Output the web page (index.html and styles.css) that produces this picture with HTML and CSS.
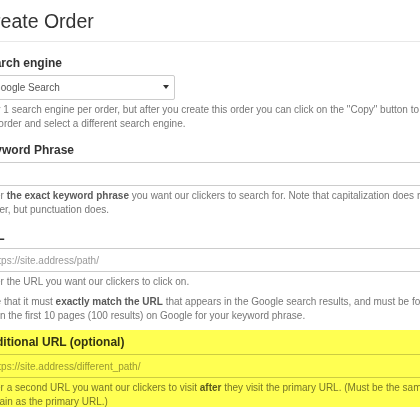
FILE: index.html
```html
<!DOCTYPE html>
<html lang="en">
<head>
<meta charset="utf-8">
<title>Create Order</title>
<link rel="stylesheet" href="styles.css">
</head>
<body>
<div class="page">
  <div class="header">
    <h2 class="title">Create Order</h2>
  </div>

  <div class="group">
    <label class="label">Search engine</label>
    <div class="select">
      <span class="select-text">Google Search</span>
      <svg class="caret" width="6" height="4" viewBox="0 0 6 4"><polygon points="0,0 6,0 3,4" fill="#333"/></svg>
    </div>
    <p class="help">Only 1 search engine per order, but after you create this order you can click on the "Copy" button to copy this order and select a different search engine.</p>
  </div>

  <div class="group">
    <label class="label">Keyword Phrase</label>
    <input class="input" type="text">
    <p class="help">Enter <b class="strong">the exact keyword phrase</b> you want our clickers to search for. Note that capitalization does not matter, but punctuation does.</p>
  </div>

  <div class="group">
    <label class="label">URL</label>
    <input class="input" type="text" placeholder="https://site.address/path/">
    <p class="help">Enter the URL you want our clickers to click on.</p>
    <p class="help help-next">Note that it must <b class="strong">exactly match the URL</b> that appears in the Google search results, and must be found within the first 10 pages (100 results) on Google for your keyword phrase.</p>
  </div>

  <div class="group highlighted">
    <label class="label">Additional URL (optional)</label>
    <input class="input" type="text" placeholder="https://site.address/different_path/">
    <p class="help">Enter a second URL you want our clickers to visit <b class="strong">after</b> they visit the primary URL. (Must be the same domain as the primary URL.)</p>
  </div>
</div>
</body>
</html>
```

FILE: styles.css
```css
html {
  background: #ffffff;
}

body {
  margin: 0;
  width: 420px;
  height: 420px;
  overflow: hidden;
  font-family: "Liberation Sans", Arial, sans-serif;
  color: #333333;
}

.page {
  margin-left: -20px;
  width: 470px;
}

.header {
  padding-top: 10px;
  padding-bottom: 9px;
  border-bottom: 1px solid #e8e8e8;
  margin-bottom: 13px;
}

.title {
  margin: 0;
  font-size: 19.5px;
  line-height: 22px;
  font-weight: normal;
  color: #333333;
}

.group {
  margin-bottom: 11px;
}

.label {
  display: block;
  font-size: 12px;
  line-height: 16px;
  font-weight: bold;
  color: #333333;
  margin-bottom: 4px;
}

.select {
  box-sizing: border-box;
  width: 195px;
  height: 25px;
  border: 1px solid #cccccc;
  border-radius: 2px;
  background: #ffffff;
  display: flex;
  align-items: center;
  justify-content: space-between;
  padding: 0 5px 0 12px;
}

.select-text {
  font-size: 10px;
  color: #555555;
}

.caret {
  display: block;
  margin-top: -2px;
}

.input {
  display: block;
  box-sizing: border-box;
  width: 100%;
  height: 24px;
  margin: 0;
  padding: 0 9px;
  border: 1px solid #cccccc;
  border-radius: 2px;
  background: #ffffff;
  font-family: "Liberation Sans", Arial, sans-serif;
  font-size: 10px;
  color: #555555;
  outline: none;
}

.input::placeholder {
  color: #999999;
  opacity: 1;
}

.help {
  margin: 3px 0 0 0;
  font-size: 10px;
  line-height: 14px;
  color: #767676;
}

.help-next {
  margin-top: 6px;
}

.strong {
  font-weight: bold;
  color: #5a5a5a;
}

.highlighted {
  position: relative;
}

.highlighted::after {
  content: "";
  position: absolute;
  left: 0;
  right: 0;
  top: -4px;
  bottom: 2px;
  background: #ffff52;
  mix-blend-mode: multiply;
  pointer-events: none;
}
```
